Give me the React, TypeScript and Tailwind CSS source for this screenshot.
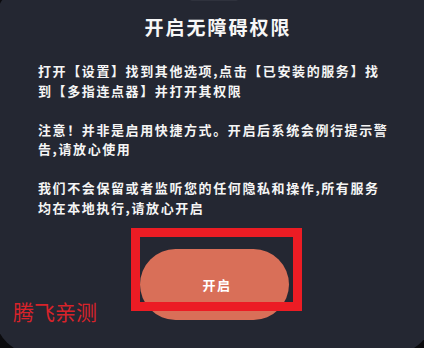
export default function App() {
  const cjk = { fontFamily: '"Noto Sans CJK SC", "Noto Sans", sans-serif' };

  return (
    <div className="h-[348px] w-[424px] overflow-hidden bg-[#0b0b0e]" style={cjk}>
      <div className="relative -ml-[5px] -mt-[17px] h-[371px] w-[438px] rounded-[40px] bg-[#242732] px-[43px] pt-[14px]">
        {/* sheet handle */}
        <div className="mx-auto h-[4px] w-[48px] rounded-full bg-[#2f323d]" />

        <h1 className="mt-[12.5px] pl-[8px] text-center text-[19px] font-bold leading-[26px] tracking-[2px] text-[#f7f7f7]">
          开启无障碍权限
        </h1>

        <div className="mt-[21.75px] text-[13px] font-bold leading-[19.5px] tracking-[1.6px] text-[#f5f5f5]">
          <p>打开【设置】找到其他选项,点击【已安装的服务】找到【多指连点器】并打开其权限</p>
          <p className="mt-[19.5px]">注意！并非是启用快捷方式。开启后系统会例行提示警告,请放心使用</p>
          <p className="mt-[19.5px]">我们不会保留或者监听您的任何隐私和操作,所有服务均在本地执行,请放心开启</p>
        </div>

        <button className="mx-auto mt-[32px] flex h-[71px] w-[149px] items-center justify-center rounded-full bg-[#d96f58] pl-[6px] text-[13px] font-bold tracking-[1.5px] text-white">
          开启
        </button>

        {/* annotation overlay */}
        <div className="absolute left-[136px] top-[245px] h-[83px] w-[171px] border-[9px] border-[#ec1c24]" />
        <div className="absolute left-[18px] top-[315.5px] text-[21px] leading-[24px] text-[#d8232a]">
          腾飞亲测
        </div>
      </div>
    </div>
  );
}
